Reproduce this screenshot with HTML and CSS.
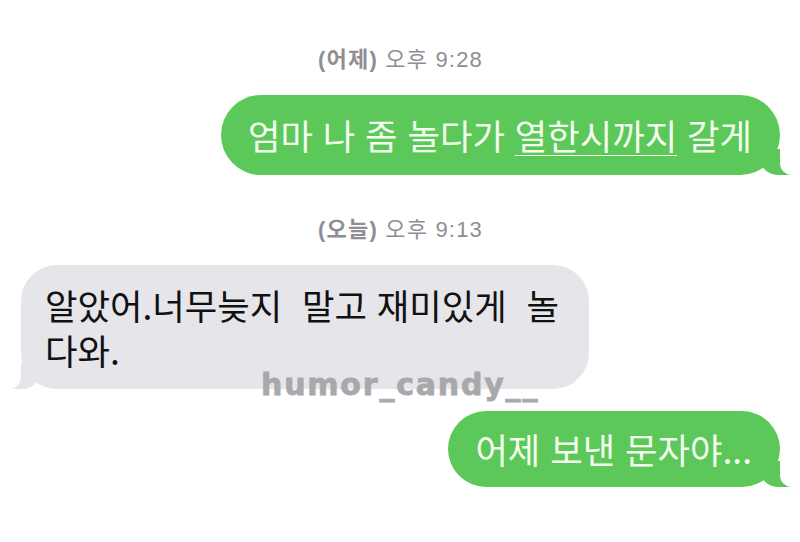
FILE: index.html
```html
<!DOCTYPE html>
<html lang="ko">
<head>
  <meta charset="UTF-8">
  <meta name="viewport" content="width=device-width, initial-scale=1.0">
  <title>문자</title>
  <link rel="stylesheet" href="styles.css">
</head>
<body>
  <div class="chat">
    <div class="stamp"><b>(어제)</b> 오후 9:28</div>
    <div class="row out">
      <div class="bubble sent">엄마 나 좀 놀다가 <u>열한시까지</u> 갈게</div>
    </div>

    <div class="stamp stamp-gap"><b>(오늘)</b> 오후 9:13</div>
    <div class="row in">
      <div class="bubble received">
        <span class="line">알았어.너무늦지&nbsp; 말고 재미있게&nbsp; 놀</span>
        <span class="line">다와.</span>
      </div>
    </div>
    <div class="row out">
      <div class="bubble sent last">어제 보낸 문자야...</div>
    </div>

    <!-- 워터마크 -->
    <div class="watermark">humor_candy__</div>
  </div>
</body>
</html>
```

FILE: styles.css
```css
body {
  margin: 0;
  background: #fff;
  font-family: "Noto Sans CJK KR", "Noto Sans", sans-serif;
}
.chat {
  position: relative;
  display: flex;
  flex-direction: column;
  gap: 22px;
  padding: 48px 20px 0 21px;
}
.stamp {
  text-align: center;
  font-family: "Liberation Sans", "Noto Sans CJK KR", sans-serif;
  font-size: 22px;
  letter-spacing: 1.2px;
  line-height: 24px;
  color: #8e8e93;
  margin-bottom: 1px;
}
.stamp b {
  font-weight: 600;
}
.stamp-gap {
  margin-top: 21px;
}
.row {
  display: flex;
}
.row.out {
  justify-content: flex-end;
}
.bubble {
  position: relative;
  font-size: 35.3px;
  line-height: 45px;
  padding: 17px 28px 18px 27px;
  border-radius: 40px;
}
.bubble u {
  text-decoration-thickness: 1px;
  text-underline-offset: 5px;
}
.sent {
  background: #5cc85a;
  color: #f2fdee;
}
.sent.last {
  padding-top: 15px;
  padding-bottom: 16px;
}
.received {
  background: #e5e5ea;
  color: #111;
  border-radius: 36px;
  padding: 17px 30px 17px 24px;
}
.received .line {
  display: block;
  height: 45px;
}

/* 말풍선 꼬리 */
.sent::before, .sent::after,
.received::before, .received::after {
  content: "";
  position: absolute;
  bottom: 0;
  height: 26px;
}
.sent::before {
  right: -13px;
  width: 32px;
  background: #5cc85a;
  border-bottom-left-radius: 18px 14px;
}
.sent::after {
  right: -30px;
  width: 30px;
  background: #fff;
  border-bottom-left-radius: 12px;
}
.received::before {
  left: -15px;
  width: 33px;
  background: #e5e5ea;
  border-bottom-right-radius: 18px 14px;
}
.received::after {
  left: -30px;
  width: 30px;
  background: #fff;
  border-bottom-right-radius: 12px;
}

.watermark {
  position: absolute;
  left: 261px;
  top: 370px;
  font-family: "DejaVu Sans", sans-serif;
  font-weight: bold;
  font-size: 30px;
  letter-spacing: 1.8px;
  line-height: 1;
  color: #a9a9ab;
  -webkit-text-stroke: 0.8px #a9a9ab;
}
```
